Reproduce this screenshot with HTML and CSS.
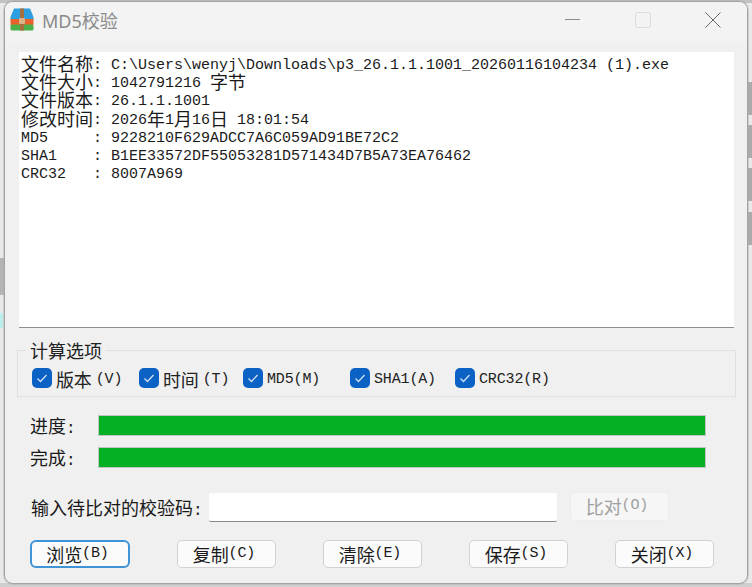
FILE: index.html
```html
<!DOCTYPE html>
<html lang="zh">
<head>
<meta charset="utf-8">
<title>MD5校验</title>
<link rel="stylesheet" href="styles.css">
</head>
<body>
<div class="window">
  <header class="titlebar">
    <svg class="app-icon" viewBox="0 0 24 23" width="24" height="23">
      <path d="M4 0.5H20L23.5 9V11.5H0.5V9Z" fill="#2b9fe2"/>
      <rect x="0.5" y="11" width="23" height="6" fill="#e8622c"/>
      <rect x="0.5" y="16.5" width="23" height="6" rx="1.5" fill="#4cb04a"/>
      <rect x="10" y="0.5" width="4" height="22" fill="#a5703f"/>
      <rect x="9" y="10" width="6" height="6" rx="1" fill="#d9b48c"/>
    </svg>
    <span class="title">MD5校验</span>
    <div class="controls">
      <span class="ctl"><svg viewBox="0 0 15 15" width="15" height="15"><path d="M0 7.5H15" stroke="#8c8c8c" fill="none"/></svg></span>
      <span class="ctl"><svg viewBox="0 0 16 16" width="16" height="16"><rect x="0.5" y="0.5" width="15" height="15" rx="2" fill="none" stroke="#dcdcdc"/></svg></span>
      <span class="ctl"><svg viewBox="0 0 16 16" width="16" height="16"><path d="M0.5 0.5L15.5 15.5M15.5 0.5L0.5 15.5" stroke="#6a6a6a" fill="none"/></svg></span>
    </div>
  </header>
  <main class="body">
    <div class="info">
      <div class="ln"><span class="cjk">文件名称</span>: C:\Users\wenyj\Downloads\p3_26.1.1.1001_20260116104234 (1).exe</div>
      <div class="ln"><span class="cjk">文件大小</span>: 1042791216 <span class="cjk">字节</span></div>
      <div class="ln"><span class="cjk">文件版本</span>: 26.1.1.1001</div>
      <div class="ln"><span class="cjk">修改时间</span>: 2026<span class="cjk">年</span>1<span class="cjk">月</span>16<span class="cjk">日</span> 18:01:54</div>
      <div class="ln">MD5&#160;&#160;&#160;&#160;&#160;: 9228210F629ADCC7A6C059AD91BE72C2</div>
      <div class="ln">SHA1&#160;&#160;&#160;&#160;: B1EE33572DF55053281D571434D7B5A73EA76462</div>
      <div class="ln">CRC32&#160;&#160;&#160;: 8007A969</div>
    </div>
    <fieldset class="options">
      <legend class="legend">计算选项</legend>
      <label class="opt o1"><span class="box"><svg viewBox="0 0 20 20" width="20" height="20"><path d="M5.5 10.5L8.5 13.5L14.5 7" stroke="#cfe0f5" stroke-width="1.3" fill="none"/></svg></span><span class="cjk">版本</span>(V)</label>
      <label class="opt o2"><span class="box"><svg viewBox="0 0 20 20" width="20" height="20"><path d="M5.5 10.5L8.5 13.5L14.5 7" stroke="#cfe0f5" stroke-width="1.3" fill="none"/></svg></span><span class="cjk">时间</span>(T)</label>
      <label class="opt o3"><span class="box"><svg viewBox="0 0 20 20" width="20" height="20"><path d="M5.5 10.5L8.5 13.5L14.5 7" stroke="#cfe0f5" stroke-width="1.3" fill="none"/></svg></span>MD5(M)</label>
      <label class="opt o4"><span class="box"><svg viewBox="0 0 20 20" width="20" height="20"><path d="M5.5 10.5L8.5 13.5L14.5 7" stroke="#cfe0f5" stroke-width="1.3" fill="none"/></svg></span>SHA1(A)</label>
      <label class="opt"><span class="box"><svg viewBox="0 0 20 20" width="20" height="20"><path d="M5.5 10.5L8.5 13.5L14.5 7" stroke="#cfe0f5" stroke-width="1.3" fill="none"/></svg></span>CRC32(R)</label>
    </fieldset>
    <div class="prog"><span class="plabel"><span class="cjk">进度</span>:</span><div class="bar"></div></div>
    <div class="prog p2"><span class="plabel"><span class="cjk">完成</span>:</span><div class="bar"></div></div>
    <div class="compare">
      <span class="clabel"><span class="cjk">输入待比对的校验码</span>:</span>
      <div class="input"></div>
      <div class="btn disabled"><span class="cjk">比对</span>(O)</div>
    </div>
    <div class="actions">
      <div class="btn focus"><span class="cjk">浏览</span>(B)</div>
      <div class="btn"><span class="cjk">复制</span>(C)</div>
      <div class="btn"><span class="cjk">清除</span>(E)</div>
      <div class="btn"><span class="cjk">保存</span>(S)</div>
      <div class="btn"><span class="cjk">关闭</span>(X)</div>
    </div>
  </main>
</div>
</body>
</html>
```
FILE: styles.css
```css
* { box-sizing: border-box; }
html, body { margin: 0; height: 100%; }
body {
  width: 752px;
  height: 587px;
  overflow: hidden;
  padding: 1px 4px 3px 4px;
  background-color: #e9e9e9;
  background-image:
    linear-gradient(#c2c2c2, #c2c2c2),
    linear-gradient(#cfcfcf, #cfcfcf),
    linear-gradient(#b4b4b4, #b4b4b4),
    linear-gradient(#bdeeee, #bdeeee),
    linear-gradient(#ababab, #ababab),
    linear-gradient(#ababab, #ababab),
    linear-gradient(#ababab, #ababab),
    linear-gradient(#ababab, #ababab);
  background-size:
    100% 3px,
    100% 4px,
    4px 37px,
    3px 15px,
    4px 33px,
    4px 33px,
    4px 33px,
    4px 33px;
  background-position:
    0 0,
    0 100%,
    0 258px,
    0 313px,
    100% 82px,
    100% 125px,
    100% 168px,
    100% 212px;
  background-repeat: no-repeat;
  font-family: "Liberation Mono", "Noto Sans CJK SC", monospace;
  font-size: 15px;
  color: #1a1a1a;
}
.cjk { font-family: "Noto Sans CJK SC", sans-serif; font-size: 18px; font-weight: 400; }
.window {
  width: 744px;
  height: 583px;
  background: #f0f0f0;
  border: 1px solid #a4a4a4;
  box-shadow: 0 0 0 1px rgba(170, 170, 170, 0.45);
  border-radius: 9px;
  display: flex;
  flex-direction: column;
  overflow: hidden;
}
.titlebar {
  height: 39px;
  padding: 0 0 4px 5px;
  flex: none;
  background: #f3f3f3;
  display: flex;
  align-items: center;
}
.app-icon { flex: none; }
.title {
  margin-left: 8px;
  font-family: "Noto Sans", "Noto Sans CJK SC", sans-serif;
  font-size: 18px;
  color: #8a8a8a;
}
.controls { margin-left: auto; display: flex; align-items: center; padding-right: 26px; gap: 54px; }
.ctl { display: flex; width: 16px; height: 16px; align-items: center; }
.body { flex: 1; display: flex; flex-direction: column; padding: 11px 12px 0 13px; }
.info {
  height: 276px;
  margin-left: 1px;
  width: 715px;
  background: #fff;
  border-bottom: 1px solid #8f8f8f;
  padding-top: 5px;
  padding-left: 2px;
}
.ln { height: 18.2px; line-height: 18px; white-space: nowrap; }
.ln .cjk { line-height: 0; vertical-align: -1.5px; }
.options {
  margin: 11px 0 0 -1px;
  padding: 6px 0 0 14px;
  width: 719px;
  height: 58px;
  border: 1px solid #e0e0e0;
  display: flex;
  align-items: center;
  min-inline-size: 0;
}
.legend { margin-left: -6px; padding: 0 4px; font-family: "Noto Sans CJK SC", sans-serif; font-size: 18px; line-height: 22px; color: #222; }
.opt { display: flex; align-items: center; gap: 4px; padding-top: 2px; font-size: 15px; letter-spacing: -0.15px; color: #222; height: 22px; }
.o1 { width: 107px; }
.o2 { width: 104px; }
.o3 { width: 107px; }
.o4 { width: 105px; }
.box { width: 20px; height: 20px; margin-top: -2px; border-radius: 5px; background: #0b62c4; display: block; flex: none; }
.box svg { display: block; }
.prog { display: flex; align-items: center; height: 21px; margin-top: 18px; padding-left: 12px; }
.p2 { margin-top: 11px; }
.plabel { width: 68px; padding-bottom: 2px; flex: none; font-size: 16px; white-space: nowrap; }
.bar { width: 608px; height: 21px; background: #06b025; border: 1px solid #c4c4c4; }
.compare { display: flex; align-items: center; height: 30px; margin-top: 24px; padding-left: 13px; }
.clabel { width: 178px; flex: none; font-size: 16px; white-space: nowrap; }
.input { width: 348px; height: 29px; background: #fff; border-bottom: 1px solid #8a8a8a; border-radius: 2px; }
.btn {
  width: 99px;
  height: 28px;
  padding: 0 5px 1px 0;
  background: #fbfbfb;
  border: 1px solid #d2d2d2;
  border-radius: 5px;
  display: flex;
  align-items: center;
  justify-content: center;
  font-size: 15px;
  letter-spacing: -0.1px;
  white-space: nowrap;
}
.disabled { margin-left: 13px; margin-top: -2px; background: #f6f6f6; border-color: #ededed; color: #a0a0a0; height: 29px; }
.focus { border: 2px solid #3f94d8; border-radius: 6px; width: 100px; }
.actions { display: flex; justify-content: space-between; margin-top: 18px; padding: 0 21px 0 12px; }
```
